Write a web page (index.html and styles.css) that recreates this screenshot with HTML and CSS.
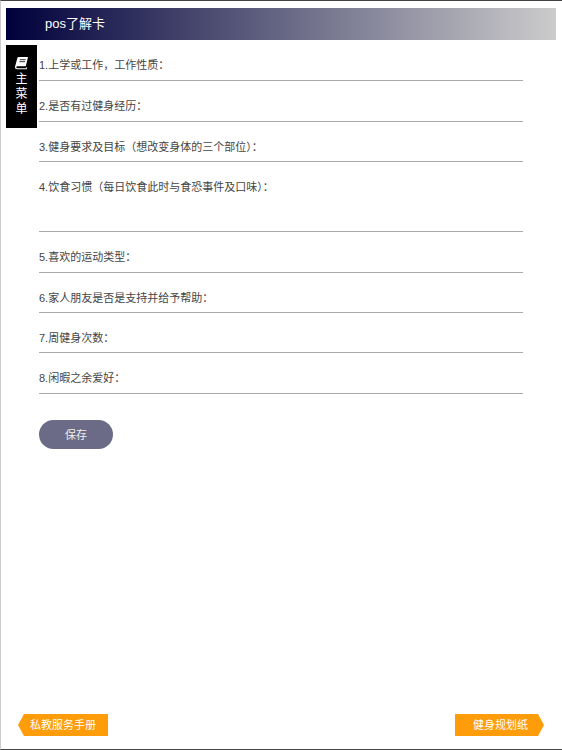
FILE: index.html
```html
<!DOCTYPE html>
<html lang="zh-CN">
<head>
  <meta charset="UTF-8" />
  <title>pos了解卡</title>
  <link rel="stylesheet" href="styles.css">
</head>
<body>
  <div class="page">
    <div class="title-bar">pos了解卡</div>

    <div class="side-menu">
      <svg class="menu-icon" viewBox="0 0 14 14" width="14" height="14">
        <path d="M4 1h9l-2.200 9.200H2.600c-.9 0-1.300.6-1.300 1.100 0 .6.5 1 1.200 1h8.600l.3-1 .9-.1-.6 2.100H2.200C.9 13.300 0 12.500 0 11.300c0-.3 0-.6.1-.9L2.300 2.200C2.500 1.500 3.200 1 4 1z" fill="#fff"/>
        <path d="M4.800 3.700h5.800M4.300 5.700h5.800" stroke="#000" stroke-width=".8" fill="none"/>
      </svg>
      <span>主</span>
      <span>菜</span>
      <span>单</span>
    </div>

    <form class="survey">
      <div class="row">1.上学或工作，工作性质：</div>
      <div class="row">2.是否有过健身经历：</div>
      <div class="row">3.健身要求及目标（想改变身体的三个部位）：</div>
      <div class="row row-tall">4.饮食习惯（每日饮食此时与食恐事件及口味）：</div>
      <div class="row">5.喜欢的运动类型：</div>
      <div class="row">6.家人朋友是否是支持并给予帮助：</div>
      <div class="row">7.周健身次数：</div>
      <div class="row">8.闲暇之余爱好：</div>
      <button type="button" class="save-btn">保存</button>
    </form>

    <div class="footer">
      <a class="tag tag-prev">私教服务手册</a>
      <a class="tag tag-next">健身规划纸</a>
    </div>
  </div>
</body>
</html>
```

FILE: styles.css
```css
* {
  box-sizing: border-box;
}

html, body {
  margin: 0;
  height: 100%;
}

body {
  font-family: "Liberation Sans", "Noto Sans CJK SC", sans-serif;
  color: #333;
  background: #fff;
}

.page {
  position: relative;
  height: 750px;
  padding: 7px 6px 0 5px;
  border-top: 1px solid #444;
  border-left: 1px solid #ccc;
  border-bottom: 1px solid #444;
  display: flex;
  flex-direction: column;
}

.title-bar {
  height: 32px;
  line-height: 32px;
  padding-left: 39px;
  font-size: 13px;
  color: #fff;
  background: linear-gradient(to right, #00003c, #ccc);
}

.side-menu {
  position: absolute;
  left: 5px;
  top: 44px;
  width: 31px;
  height: 83px;
  padding-top: 11px;
  background: #000;
  color: #fff;
  font-size: 12px;
  line-height: 15px;
  display: flex;
  flex-direction: column;
  align-items: center;
}

.menu-icon {
  margin-bottom: 2px;
}

.survey {
  padding: 0 0 0 33px;
  margin-top: 5px;
  flex: 1;
}

.row {
  width: 484px;
  height: 40.400px;
  padding-top: 18px;
  font-size: 11px;
  line-height: 14px;
  color: #444;
  border-bottom: 1px solid #aaa;
}

.row:first-child {
  height: 36.300px;
  padding-top: 13px;
}

.row-tall {
  height: 70.100px;
}

.save-btn {
  display: block;
  width: 74px;
  height: 29px;
  margin-top: 26px;
  border: none;
  border-radius: 15px;
  background: #6b6b87;
  color: #eee;
  font-family: inherit;
  font-size: 11px;
}

.footer {
  display: flex;
  justify-content: space-between;
  padding: 0 12px 13px 12px;
}

.tag {
  height: 22px;
  line-height: 22px;
  font-size: 11px;
  color: #fff;
  background: #ff9c0a;
  text-align: center;
}

.tag-prev {
  width: 90px;
  clip-path: polygon(6px 0, 100% 0, 100% 100%, 6px 100%, 0 50%);
}

.tag-next {
  width: 89px;
  padding-left: 2px;
  clip-path: polygon(0 0, calc(100% - 6px) 0, 100% 50%, calc(100% - 6px) 100%, 0 100%);
}
```
